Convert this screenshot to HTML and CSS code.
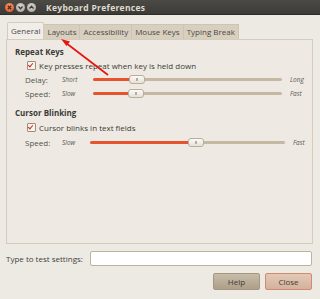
FILE: index.html
```html
<!DOCTYPE html>
<html lang="en">
<head>
    <meta charset="UTF-8">
    <title>Keyboard Preferences</title>
    <link rel="stylesheet" href="styles.css">
</head>
<body>
    <div class="window">
        <div class="titlebar">
            <div class="wm-buttons">
                <span class="wm close"><svg width="9" height="9" viewBox="0 0 9 9"><path d="M2.8 2.8L6.2 6.2M6.2 2.8L2.8 6.2" stroke="#4a2a1a" stroke-width="1.3"/></svg></span>
                <span class="wm"><svg width="9" height="9" viewBox="0 0 9 9"><path d="M2.5 3.5L4.5 5.7L6.5 3.5" stroke="#3c3b37" stroke-width="1.3" fill="none"/></svg></span>
                <span class="wm"><svg width="9" height="9" viewBox="0 0 9 9"><path d="M2.5 5.5L4.5 3.3L6.5 5.5" stroke="#3c3b37" stroke-width="1.3" fill="none"/></svg></span>
            </div>
            <span class="title">Keyboard Preferences</span>
        </div>

        <div class="tabs">
            <span class="tab active">General</span>
            <span class="tab">Layouts</span>
            <span class="tab">Accessibility</span>
            <span class="tab">Mouse Keys</span>
            <span class="tab">Typing Break</span>
        </div>

        <div class="panel">
            <div class="section-title">Repeat Keys</div>
            <div class="check-row"><span class="check"></span>Key presses repeat when key is held down</div>
            <div class="slider-row">
                <span class="lbl">Delay:</span>
                <span class="hint">Short</span>
                <span class="track"><span class="fill" style="width: 36px"></span><span class="knob"></span><span class="rest"></span></span>
                <span class="hint end">Long</span>
            </div>
            <div class="slider-row">
                <span class="lbl">Speed:</span>
                <span class="hint">Slow</span>
                <span class="track"><span class="fill" style="width: 35px"></span><span class="knob"></span><span class="rest"></span></span>
                <span class="hint end">Fast</span>
            </div>

            <div class="section-title second">Cursor Blinking</div>
            <div class="check-row"><span class="check"></span>Cursor blinks in text fields</div>
            <div class="slider-row">
                <span class="lbl">Speed:</span>
                <span class="hint">Slow</span>
                <span class="track wide"><span class="fill" style="width: 98px"></span><span class="knob"></span><span class="rest"></span></span>
                <span class="hint end">Fast</span>
            </div>
        </div>

        <div class="test-row">
            <span>Type to test settings:</span>
            <span class="entry"></span>
        </div>

        <div class="actions">
            <span class="btn">Help</span>
            <span class="btn default">Close</span>
        </div>

        <svg class="arrow" width="120" height="80" viewBox="0 0 120 80">
            <path d="M108 75L66 43" stroke="#e8150f" stroke-width="1.6"/>
            <path d="M61 39L70 41.5L66.5 46Z" fill="#e8150f"/>
        </svg>
    </div>
</body>
</html>
```

FILE: styles.css
```css
body {
    margin: 0;
    font-family: "Open Sans", "DejaVu Sans", sans-serif;
    font-size: 8px;
    color: #3c3b37;
    background: #edeae4;
}

.window {
    position: relative;
    width: 320px;
    height: 299px;
    background: #edeae4;
    overflow: hidden;
}

.titlebar {
    height: 14px;
    display: flex;
    align-items: center;
    padding: 0 0 0 5px;
    background: linear-gradient(#4b4a45, #3c3b37);
    border-bottom: 1px solid #2d2c29;
}

.wm-buttons {
    display: flex;
    gap: 2px;
}

.wm {
    width: 9px;
    height: 9px;
    border-radius: 50%;
    background: radial-gradient(circle at 50% 35%, #d9d6cf, #a29f98);
    display: flex;
}

.wm.close {
    background: radial-gradient(circle at 50% 35%, #f79a6b, #df4f1f);
}

.title {
    margin-left: 10px;
    color: #dfdbd2;
    font-weight: bold;
    font-size: 8.5px;
    letter-spacing: 0.3px;
}

.tabs {
    display: flex;
    align-items: flex-end;
    margin: 7px 0 0 7px;
    height: 17px;
}

.tab {
    height: 14px;
    line-height: 14px;
    padding: 0 3px;
    background: #d9cfbf;
    border: 1px solid #cfc4b2;
    border-bottom: none;
    border-left: none;
    color: #4c4a45;
}

.tab.active {
    height: 16px;
    line-height: 16px;
    padding: 0 3px;
    background: #f1eee9;
    border: 1px solid #d6ccbb;
    border-bottom: none;
    border-radius: 2px 2px 0 0;
}

.panel {
    margin: 0 7px 0 6px;
    height: 205px;
    border: 1px solid #d6ccbb;
    background: #eeeae3;
    padding: 6px 0 0 8px;
    box-sizing: border-box;
}

.section-title {
    font-weight: bold;
    height: 12px;
    line-height: 12px;
    margin-top: 0;
}

.section-title.second {
    margin-top: 7px;
}

.check-row {
    display: flex;
    align-items: center;
    height: 14px;
    margin-left: 12px;
}

.section-title.second + .check-row {
    height: 16px;
}

.check {
    width: 7px;
    height: 7px;
    margin-right: 3px;
    border: 1px solid #9b8e7c;
    border-radius: 1px;
    background: #f7f4ef;
    position: relative;
}

.check::after {
    content: "";
    position: absolute;
    left: 1px;
    top: 0;
    width: 2px;
    height: 4px;
    border: solid #d4281e;
    border-width: 0 1.5px 1.5px 0;
    transform: rotate(40deg);
}

.slider-row {
    display: flex;
    align-items: center;
    height: 14px;
    margin-left: 10px;
}

.lbl {
    width: 37px;
    color: #55534e;
}

.hint {
    width: 31px;
    font-style: italic;
    font-size: 6.5px;
    color: #5a5853;
}

.hint.end {
    width: auto;
    margin-left: 8px;
}

.track {
    display: flex;
    align-items: center;
    width: 189px;
}

.track.wide {
    width: 195px;
    margin-left: -3px;
}

.fill {
    height: 3px;
    background: #e5532f;
    border-radius: 2px 0 0 2px;
}

.rest {
    flex: 1;
    height: 3px;
    background: #c6b9a3;
    border-radius: 0 2px 2px 0;
}

.knob {
    width: 14px;
    height: 7px;
    border: 1px solid #b9ae9c;
    border-radius: 3px;
    background: linear-gradient(#fbfaf8, #e6e1d8);
    position: relative;
    flex: none;
}

.knob::after {
    content: "";
    position: absolute;
    left: 6px;
    top: 2px;
    width: 2px;
    height: 3px;
    border-left: 1px solid #b9ae9c;
    border-right: 1px solid #b9ae9c;
    box-sizing: border-box;
}

.test-row {
    display: flex;
    align-items: center;
    margin: 7px 8px 0 6px;
    height: 15px;
    color: #44423d;
}

.entry {
    margin-left: auto;
    width: 220px;
    height: 13px;
    background: #ffffff;
    border: 1px solid #bfb19b;
    border-radius: 2px;
}

.actions {
    display: flex;
    justify-content: flex-end;
    gap: 5px;
    margin: 7px 8px 0 0;
}

.btn {
    width: 45px;
    height: 15px;
    line-height: 15px;
    text-align: center;
    border: 1px solid #a39783;
    border-radius: 2px;
    background: linear-gradient(#c8bda9, #ad9f88);
    color: #3e3c37;
}

.btn.default {
    border-color: #d48a72;
    background: linear-gradient(#e2c9b7, #d5b19c);
}

.arrow {
    position: absolute;
    left: 0;
    top: 0;
    pointer-events: none;
}
```
